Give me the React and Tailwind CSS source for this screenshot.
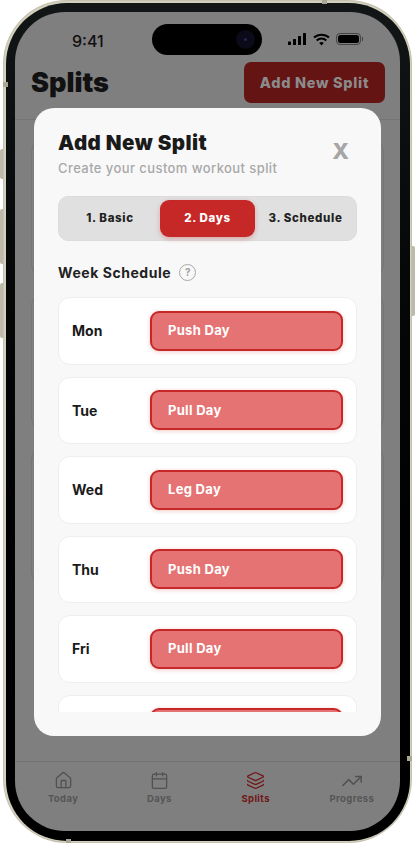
import React from "react";
import { House, Calendar, Layers, TrendingUp } from "lucide-react";

const days = [
  ["Mon", "Push Day"],
  ["Tue", "Pull Day"],
  ["Wed", "Leg Day"],
  ["Thu", "Push Day"],
  ["Fri", "Pull Day"],
  ["", ""],
];

function Tab({ icon: Icon, label, active, size = 19 }) {
  return (
    <div className="flex-1 flex flex-col items-center">
      <div className="h-[19px] flex items-center justify-center">
        <Icon size={size} strokeWidth={1.6} className={active ? "text-[#701616]" : "text-[#505050]"} />
      </div>
      <span className={`mt-[3px] text-[9.5px] leading-[12px] font-bold tracking-[0.4px] ${active ? "text-[#701616]" : "text-[#555555]"}`}>{label}</span>
    </div>
  );
}

export default function App() {
  return (
    <div className="relative w-[415px] h-[843px] bg-white overflow-hidden font-['Inter',sans-serif]">
      {/* side buttons */}
      <div className="absolute left-[0px] top-[149px] w-[4px] h-[30px] bg-[#bdbaa9] rounded-l-[2px]" />
      <div className="absolute left-[0px] top-[209px] w-[4px] h-[55px] bg-[#bdbaa9] rounded-l-[2px]" />
      <div className="absolute left-[0px] top-[283px] w-[4px] h-[55px] bg-[#bdbaa9] rounded-l-[2px]" />
      <div className="absolute right-[0px] top-[246px] w-[4px] h-[70px] bg-[#bdbaa9] rounded-r-[2px]" />
      {/* phone */}
      <div className="absolute left-[3px] top-0 w-[409px] h-[843px] rounded-[64px] bg-[#c4c1af] p-[1px]">
        <div className="w-full h-full rounded-[63px] bg-[#d3d0bd] p-[1.5px]">
          <div className="w-full h-full rounded-[61px] bg-gradient-to-b from-[#121616] to-black p-[9.5px]">
            <div className="relative w-full h-full rounded-[50px] bg-[#7f7f7f] overflow-hidden flex flex-col">
              {/* status */}
              <div className="h-[52px] shrink-0 flex items-center justify-between pl-[57px] pr-[37px] pt-[2px]">
                <span className="mt-[4px] text-[16px] font-medium text-[#111111]">9:41</span>
                <div className="flex items-center">
                  <svg width="18" height="12" viewBox="0 0 18 12" fill="#000"><rect x="0" y="8.5" width="3" height="3.5" rx=".6"/><rect x="5" y="6" width="3" height="6" rx=".6"/><rect x="10" y="3" width="3" height="9" rx=".6"/><rect x="15" y="0" width="3" height="12" rx=".6"/></svg>
                  <svg className="ml-[7px]" width="17" height="13" viewBox="0 0 17 13" fill="none" stroke="#000" strokeWidth="2"><path d="M1 4.6a11 11 0 0 1 15 0"/><path d="M3.7 7.4a7 7 0 0 1 9.6 0"/><path d="M8.5 12.4l-2.3-2.4a3.3 3.3 0 0 1 4.6 0z" fill="#000" stroke="none"/></svg>
                  <div className="ml-[6px] flex items-center">
                    <div className="w-[25px] h-[12px] rounded-[4px] border border-[#444] p-[1px]"><div className="w-full h-full rounded-[2.5px] bg-black" /></div>
                    <div className="w-[1px] h-[4px] bg-[#444] ml-[1px]" />
                  </div>
                </div>
              </div>
              <div className="absolute left-[137px] top-[12px] w-[110px] h-[31px] rounded-full bg-black flex items-center justify-end pr-[7px]">
                <div className="w-[19px] h-[19px] rounded-full bg-[#0a0a18] flex items-center justify-center"><div className="w-[3px] h-[3px] rounded-full bg-[#24245a]" /></div>
              </div>
              {/* header */}
              <div className="h-[56px] shrink-0 flex items-start justify-between pl-[16px] pr-[15px] border-b border-[#747474]">
                <span className="text-[27px] leading-[38px] font-black text-[#111111]">Splits</span>
                <div className="w-[141px] h-[41px] -mt-[2px] rounded-[7px] bg-[#651414] flex items-center justify-center text-[14.5px] font-extrabold tracking-[0.7px] text-[#8b8b8b]">Add New Split</div>
              </div>
              {/* dimmed cards */}
              <div className="flex-1 px-[16px] pt-[18px] flex flex-col gap-[14px]">
                <div className="h-[140px] rounded-[14px] border border-[#757575]" />
                <div className="h-[140px] rounded-[14px] border border-[#757575]" />
                <div className="h-[140px] rounded-[14px] border border-[#757575]" />
              </div>
              {/* tabs */}
              <div className="h-[70px] shrink-0 border-t border-[#747474] flex pt-[9px]">
                <Tab icon={House} label="Today" />
                <Tab icon={Calendar} label="Days" />
                <Tab icon={Layers} label="Splits" active />
                <Tab icon={TrendingUp} label="Progress" size={22} />
              </div>
              {/* modal */}
              <div className="absolute left-[19px] top-[96px] w-[347px] h-[628px] rounded-[20px] bg-[#f8f8f8] flex flex-col pt-[22px] px-[24px] pb-[24px]">
                <div className="flex items-start justify-between">
                  <div>
                    <div className="text-[20.5px] leading-[26px] font-black tracking-[0.45px] text-[#1a1a1a]">Add New Split</div>
                    <div className="mt-[3px] text-[13px] leading-[18px] font-medium tracking-[0.42px] text-[#a8a8a8]">Create your custom workout split</div>
                  </div>
                  <div className="mt-[7px] mr-[8px] text-[22px] leading-[28px] font-extrabold text-[#a6a6a6]">X</div>
                </div>
                <div className="mt-[19px] h-[45px] shrink-0 rounded-[10px] bg-[#e0e0e0] border border-[#dcdcdc] py-[3px] pl-[1px] flex items-stretch">
                  <div className="w-[100px] flex items-center justify-center text-[11.5px] font-extrabold text-[#222222] tracking-[0.65px]">1. Basic</div>
                  <div className="w-[95px] rounded-[9px] bg-[#c62828] shadow-[0_2px_5px_rgba(198,40,40,0.3)] flex items-center justify-center text-[11.5px] font-extrabold text-white tracking-[0.65px]">2. Days</div>
                  <div className="flex-1 flex items-center justify-center text-[11.5px] font-extrabold text-[#222222] tracking-[0.65px]">3. Schedule</div>
                </div>
                <div className="mt-[21px] flex items-center gap-[8px] h-[20px]">
                  <span className="text-[14px] font-bold tracking-[0.55px] text-[#222222]">Week Schedule</span>
                  <span className="w-[17px] h-[17px] rounded-full border-[1.5px] border-[#a8a8a8] flex items-center justify-center text-[10px] font-bold text-[#a0a0a0]">?</span>
                </div>
                <div className="mt-[15px] flex-1 min-h-0 overflow-hidden flex flex-col gap-[12px]">
                  {days.map(([d, w], i) => (
                    <div key={i} className="shrink-0 h-[67.5px] rounded-[12px] bg-white border border-[#eeeeee] flex items-center justify-between pl-[13px] pr-[13px]">
                      <span className="text-[14px] font-bold text-[#1a1a1a]">{d}</span>
                      <div className="w-[193px] h-[40px] rounded-[9px] bg-[#e57373] border-2 border-[#c62828] shadow-[0_1px_4px_rgba(198,40,40,0.25)] flex items-center pl-[16px] text-[13px] font-bold tracking-[0.3px] text-white">{w}</div>
                    </div>
                  ))}
                </div>
              </div>
            </div>
          </div>
        </div>
      </div>
      {/* antenna marks */}
      <div className="absolute left-[3px] top-[82px] w-[5px] h-[5px] bg-[#a9a693]" />
      <div className="absolute left-[322px] top-0 w-[5px] h-[4px] bg-[#a9a693]" />
      <div className="absolute left-[66px] top-[839px] w-[5px] h-[4px] bg-[#a9a693]" />
      <div className="absolute left-[407px] top-[756px] w-[5px] h-[5px] bg-[#a9a693]" />
    </div>
  );
}
